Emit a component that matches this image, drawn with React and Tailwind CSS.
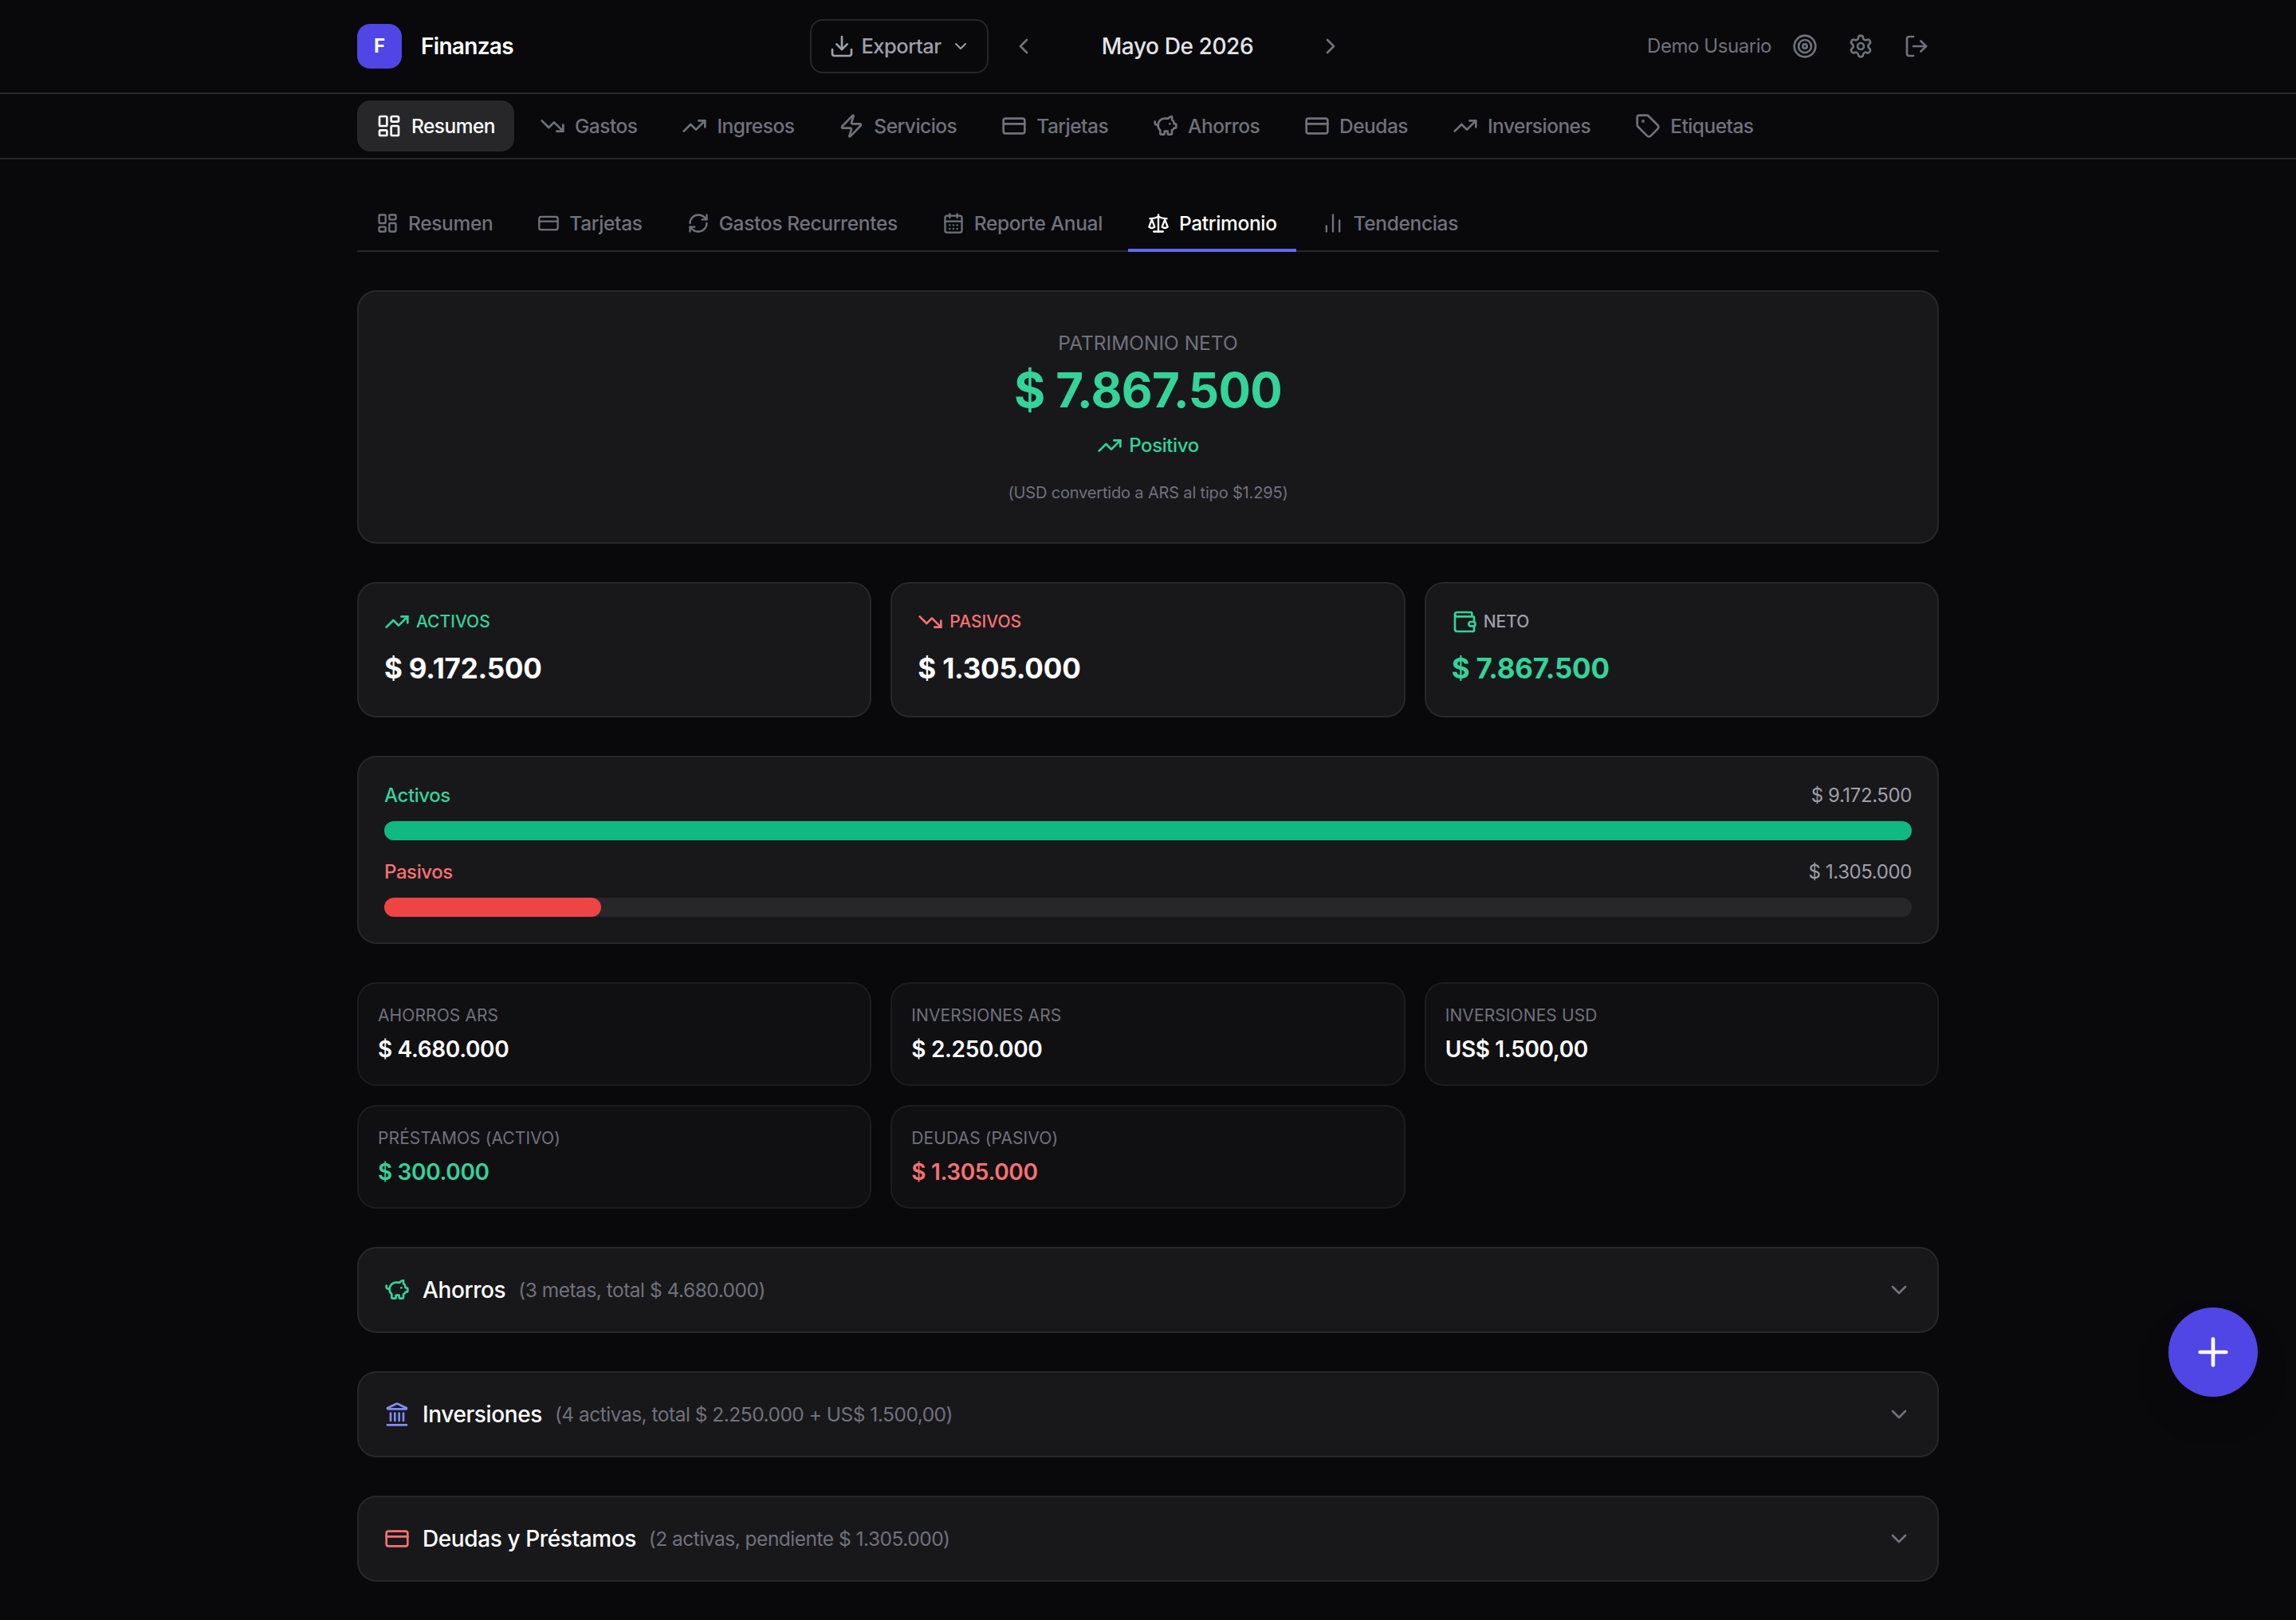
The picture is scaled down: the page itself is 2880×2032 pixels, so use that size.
import React from "react";
import {
  BarChart2,
  CalendarDays,
  ChevronDown,
  ChevronLeft,
  ChevronRight,
  CreditCard,
  Download,
  Landmark,
  LayoutDashboard,
  LogOut,
  PiggyBank,
  Plus,
  RefreshCw,
  Scale,
  Settings,
  Tag,
  Target,
  TrendingDown,
  TrendingUp,
  Wallet,
  Zap,
} from "lucide-react";

const navItems = [
  { label: "Resumen", icon: LayoutDashboard, active: true },
  { label: "Gastos", icon: TrendingDown },
  { label: "Ingresos", icon: TrendingUp },
  { label: "Servicios", icon: Zap },
  { label: "Tarjetas", icon: CreditCard },
  { label: "Ahorros", icon: PiggyBank },
  { label: "Deudas", icon: CreditCard },
  { label: "Inversiones", icon: TrendingUp },
  { label: "Etiquetas", icon: Tag },
];

const tabs = [
  { label: "Resumen", icon: LayoutDashboard },
  { label: "Tarjetas", icon: CreditCard },
  { label: "Gastos Recurrentes", icon: RefreshCw },
  { label: "Reporte Anual", icon: CalendarDays },
  { label: "Patrimonio", icon: Scale, active: true },
  { label: "Tendencias", icon: BarChart2 },
];

const details = [
  { label: "AHORROS ARS", value: "$ 4.680.000", color: "text-white" },
  { label: "INVERSIONES ARS", value: "$ 2.250.000", color: "text-white" },
  { label: "INVERSIONES USD", value: "US$ 1.500,00", color: "text-white" },
  { label: "PRÉSTAMOS (ACTIVO)", value: "$ 300.000", color: "text-[#34d399]" },
  { label: "DEUDAS (PASIVO)", value: "$ 1.305.000", color: "text-[#f87171]" },
];

const sections = [
  { title: "Ahorros", note: "(3 metas, total $ 4.680.000)", icon: PiggyBank, color: "text-[#34d399]" },
  { title: "Inversiones", note: "(4 activas, total $ 2.250.000 + US$ 1.500,00)", icon: Landmark, color: "text-[#818cf8]" },
  { title: "Deudas y Préstamos", note: "(2 activas, pendiente $ 1.305.000)", icon: CreditCard, color: "text-[#f87171]" },
];

const Header = () => (
  <header className="h-[118px] border-b-2 border-zinc-800">
    <div className="mx-auto flex h-full max-w-[2048px] items-center justify-between px-8">
      <div className="flex items-center gap-6">
        <div className="flex h-14 w-14 items-center justify-center rounded-2xl bg-[#4f46e5] text-2xl font-bold text-white">F</div>
        <span className="text-[28px] font-semibold tracking-[-0.7px] text-white">Finanzas</span>
      </div>
      <div className="ml-1 flex items-center">
        <button className="flex h-[68px] w-[224px] items-center rounded-2xl border-2 border-zinc-800 pl-[22px] text-[25.5px] font-medium text-zinc-400">
          <Download size={32} />
          <span className="ml-2 tracking-[-0.5px]">Exportar</span>
          <ChevronDown size={24} className="ml-3" />
        </button>
        <button className="ml-4 p-3 text-zinc-500"><ChevronLeft size={32} /></button>
        <span className="w-[329px] text-center text-[28px] font-medium tracking-[-0.4px] text-zinc-200">Mayo De 2026</span>
        <button className="p-3 text-zinc-500"><ChevronRight size={32} /></button>
      </div>
      <div className="flex items-center gap-[14px] text-zinc-500">
        <span className="text-[24px] tracking-[-0.45px]">Demo Usuario</span>
        <button className="p-3"><Target size={32} /></button>
        <button className="p-3"><Settings size={32} /></button>
        <button className="p-3"><LogOut size={32} /></button>
      </div>
    </div>
  </header>
);

const Nav = () => (
  <nav className="border-b-2 border-zinc-800">
    <div className="mx-auto flex max-w-[2048px] gap-2 px-8 py-2">
      {navItems.map((item) => {
        const Icon = item.icon;
        return (
          <a
            key={item.label}
            className={item.active
              ? "flex items-center gap-3 rounded-2xl bg-zinc-800 px-6 py-3 text-[24.5px] leading-10 font-medium tracking-[-0.53px] text-white"
              : "flex items-center gap-3 rounded-2xl px-6 py-3 text-[24.5px] leading-10 font-medium tracking-[-0.53px] text-zinc-500"}
          >
            <Icon size={32} />
            {item.label}
          </a>
        );
      })}
    </div>
  </nav>
);

const Tabs = () => (
  <div className="flex gap-2 border-b-2 border-zinc-800">
    {tabs.map((tab) => {
      const Icon = tab.icon;
      return (
        <a
          key={tab.label}
          className={tab.active
            ? "-mb-[2px] flex items-center gap-3 border-b-4 border-[#6366f1] px-6 py-3 text-[24.5px] leading-10 font-medium tracking-[-0.35px] text-white"
            : "-mb-[2px] flex items-center gap-3 border-b-4 border-transparent px-6 py-3 text-[24.5px] leading-10 font-medium tracking-[-0.35px] text-zinc-500"}
        >
          <Icon size={28} />
          {tab.label}
        </a>
      );
    })}
  </div>
);

const Hero = () => (
  <section className="mt-12 flex h-[318px] flex-col items-center rounded-3xl border-2 border-zinc-800 bg-zinc-900 pt-[48px]">
    <p className="text-[24.5px] leading-8 text-zinc-500">PATRIMONIO NETO</p>
    <p className="mt-[3px] text-[60px] leading-20 font-bold tracking-[-0.7px] text-[#34d399]">$ 7.867.500</p>
    <p className="mt-[14px] flex items-center gap-2 text-[24px] leading-8 font-medium tracking-[-0.4px] text-[#34d399]">
      <TrendingUp size={32} />
      Positivo
    </p>
    <p className="mt-[27px] text-[20px] leading-8 tracking-[-0.17px] text-zinc-500">(USD convertido a ARS al tipo $1.295)</p>
  </section>
);

const SummaryCard = ({ icon: Icon, iconColor, label, labelColor, value, valueColor }) => (
  <div className="h-[170px] rounded-3xl border-2 border-zinc-800 bg-zinc-900 p-8">
    <div className={`flex h-8 items-center gap-2 text-[21px] font-medium ${labelColor}`}>
      <Icon size={32} className={iconColor} />
      {label}
    </div>
    <p className={`mt-[14px] text-[35px] leading-14 font-bold tracking-[-0.2px] ${valueColor}`}>{value}</p>
  </div>
);

const Bar = ({ label, amount, labelColor, barColor, width }) => (
  <div>
    <div className="flex items-center justify-between text-[24px] leading-8 tracking-[-0.4px]">
      <span className={`font-medium ${labelColor}`}>{label}</span>
      <span className="text-zinc-400">{amount}</span>
    </div>
    <div className="mt-4 h-6 rounded-full bg-zinc-800">
      <div className={`h-6 rounded-full ${barColor}`} style={{ width }} />
    </div>
  </div>
);

const Section = ({ icon: Icon, color, title, note }) => (
  <div className="flex h-[108px] items-center justify-between rounded-3xl border-2 border-zinc-800 bg-zinc-900 px-8">
    <div className="flex items-center gap-4">
      <Icon size={32} className={color} />
      <span className="text-[28px] font-medium tracking-[-0.4px] text-white">{title}</span>
      <span className="text-[24.5px] tracking-[-0.5px] text-zinc-500">{note}</span>
    </div>
    <ChevronDown size={32} className="text-zinc-500" />
  </div>
);

const App = () => {
  return (
    <div className="min-h-[2032px] bg-zinc-950 font-['Inter',sans-serif]">
      <Header />
      <Nav />
      <main className="mx-auto max-w-[2048px] px-8 pt-12 pb-12">
        <Tabs />
        <Hero />
        <div className="mt-12 grid grid-cols-3 gap-6">
          <SummaryCard icon={TrendingUp} iconColor="text-[#34d399]" label="ACTIVOS" labelColor="text-[#34d399]" value="$ 9.172.500" valueColor="text-white" />
          <SummaryCard icon={TrendingDown} iconColor="text-[#f87171]" label="PASIVOS" labelColor="text-[#f87171]" value="$ 1.305.000" valueColor="text-white" />
          <SummaryCard icon={Wallet} iconColor="text-[#34d399]" label="NETO" labelColor="text-zinc-400" value="$ 7.867.500" valueColor="text-[#34d399]" />
        </div>
        <section className="mt-12 flex flex-col gap-6 rounded-3xl border-2 border-zinc-800 bg-zinc-900 p-8">
          <Bar label="Activos" amount="$ 9.172.500" labelColor="text-[#34d399]" barColor="bg-[#10b981]" width="100%" />
          <Bar label="Pasivos" amount="$ 1.305.000" labelColor="text-[#f87171]" barColor="bg-[#ef4444]" width="14.2%" />
        </section>
        <div className="mt-12 grid grid-cols-3 gap-6">
          {details.map((d) => (
            <div key={d.label} className="h-[130px] rounded-3xl border-2 border-zinc-800/50 bg-zinc-900/50 p-6">
              <p className="text-[21px] leading-8 tracking-[0.1px] text-zinc-500">{d.label}</p>
              <p className={`mt-[6px] text-[28px] leading-10 font-semibold tracking-[-0.35px] ${d.color}`}>{d.value}</p>
            </div>
          ))}
        </div>
        <div className="mt-12 flex flex-col gap-12">
          {sections.map((s) => (
            <Section key={s.title} {...s} />
          ))}
        </div>
      </main>
      <button className="fixed top-[1640px] right-12 flex h-28 w-28 items-center justify-center rounded-full bg-[#4f46e5] text-white shadow-2xl">
        <Plus size={56} />
      </button>
    </div>
  );
};

export default App;
